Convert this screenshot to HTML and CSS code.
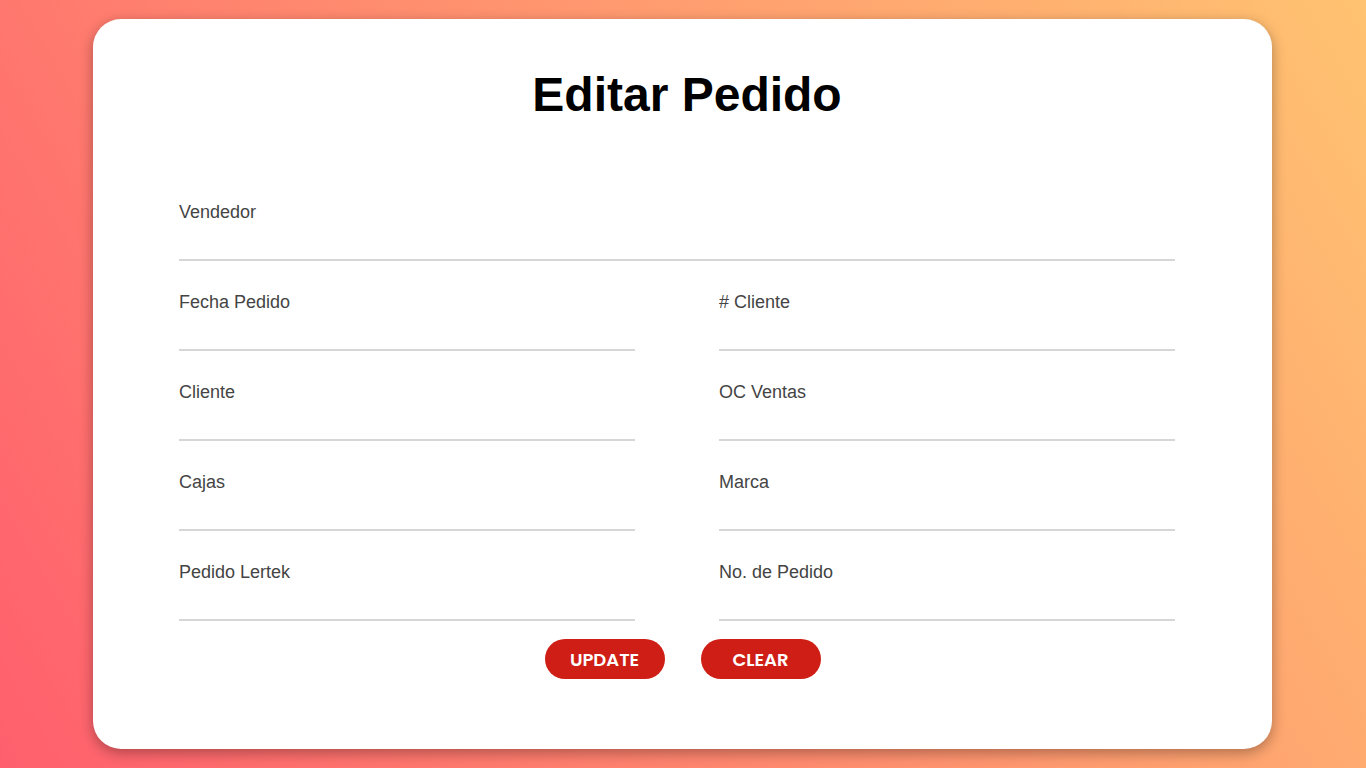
FILE: index.html
```html
<!DOCTYPE html>
<html lang="es">
<head>
<meta charset="utf-8">
<meta name="viewport" content="width=device-width, initial-scale=1">
<title>Editar Pedido</title>
<link rel="stylesheet" href="styles.css">
</head>
<body class="page">
<main class="card">
  <h1 class="title">Editar Pedido</h1>
  <form class="form">
    <div class="fields">
      <div class="field field-wide"><label class="label" for="vendedor">Vendedor</label><input class="input" id="vendedor" type="text"></div>
      <div class="field"><label class="label" for="fecha">Fecha Pedido</label><input class="input" id="fecha" type="text"></div>
      <div class="field"><label class="label" for="numcliente"># Cliente</label><input class="input" id="numcliente" type="text"></div>
      <div class="field"><label class="label" for="cliente">Cliente</label><input class="input" id="cliente" type="text"></div>
      <div class="field"><label class="label" for="oc">OC Ventas</label><input class="input" id="oc" type="text"></div>
      <div class="field"><label class="label" for="cajas">Cajas</label><input class="input" id="cajas" type="text"></div>
      <div class="field"><label class="label" for="marca">Marca</label><input class="input" id="marca" type="text"></div>
      <div class="field"><label class="label" for="lertek">Pedido Lertek</label><input class="input" id="lertek" type="text"></div>
      <div class="field"><label class="label" for="numpedido">No. de Pedido</label><input class="input" id="numpedido" type="text"></div>
    </div>
    <div class="actions">
      <button class="button" type="submit">UPDATE</button>
      <button class="button" type="reset">CLEAR</button>
    </div>
  </form>
</main>
</body>
</html>
```
FILE: styles.css
```css
* {
  box-sizing: border-box;
}

.page {
  display: flex;
  min-height: 100vh;
  margin: 0;
  padding: 19px 94px 19px 93px;
  background: linear-gradient(60deg, #ff5f6d, #ffc371);
  font-family: "Liberation Sans", Arial, sans-serif;
}

.card {
  flex: 1;
  padding: 48px 97px 70px 86px;
  border-radius: 28px;
  background: #fff;
  box-shadow: 0 4px 14px rgba(0, 0, 0, 0.32);
}

.title {
  margin: 0 0 59px;
  padding-left: 20px;
  font-size: 48px;
  line-height: 56px;
  text-align: center;
  color: #000;
}

.fields {
  display: grid;
  grid-template-columns: 1fr 1fr;
  column-gap: 84px;
  row-gap: 11px;
}

.field {
  display: flex;
  flex-direction: column;
  height: 79px;
  padding-top: 20px;
}

.field-wide {
  grid-column: 1 / -1;
}

.label {
  font-size: 18px;
  line-height: 20px;
  color: #444;
}

.input {
  flex: 1;
  width: 100%;
  min-height: 0;
  border: 0;
  border-bottom: 2px solid #d6d6d6;
  padding: 0;
  outline: none;
  background: transparent;
  font: inherit;
  font-size: 18px;
}

.actions {
  display: flex;
  justify-content: center;
  gap: 36px;
  margin-top: 18px;
  padding-left: 11px;
}

.button {
  width: 120px;
  height: 40px;
  border: 0;
  border-radius: 20px;
  padding: 0;
  background: #cf1e15;
  color: #fff;
  font-family: Poppins, Inter, sans-serif;
  font-size: 18px;
  font-weight: 600;
  cursor: pointer;
}
```
